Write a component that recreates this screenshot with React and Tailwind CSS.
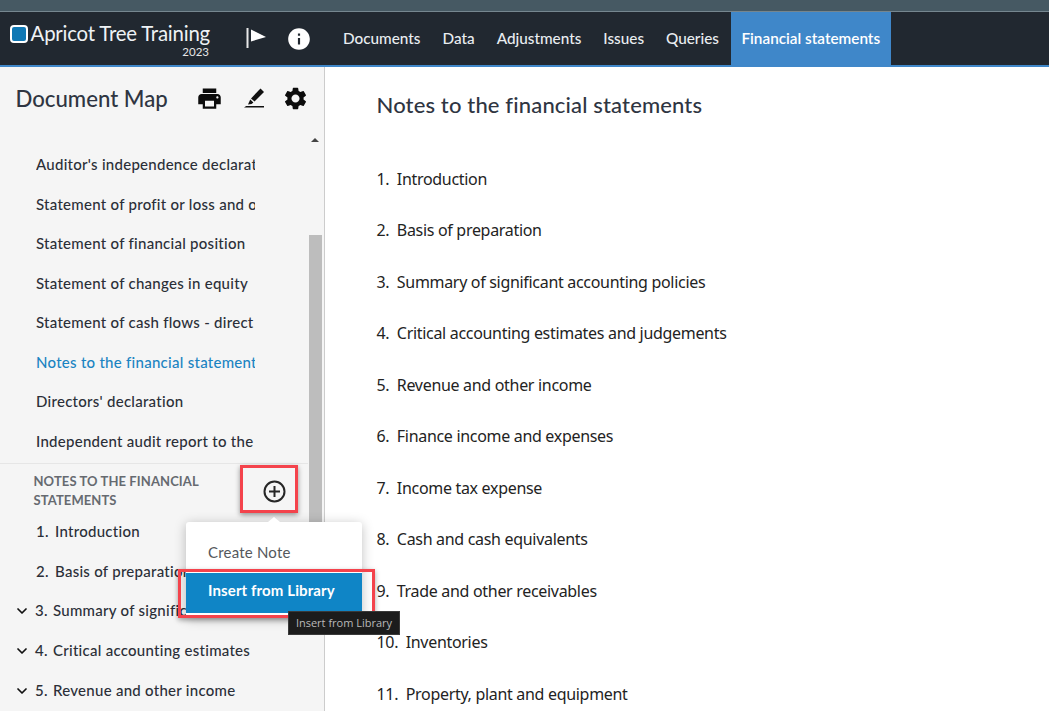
import React from "react";
import { MdPrint, MdSettings, MdInfo } from "react-icons/md";
import { ChevronDown } from "lucide-react";

const nav = ["Documents", "Data", "Adjustments", "Issues", "Queries"];
const docs = [
  "Auditor's independence declaration",
  "Statement of profit or loss and other comprehensive income",
  "Statement of financial position",
  "Statement of changes in equity",
  "Statement of cash flows - direct method",
  "Notes to the financial statements",
  "Directors' declaration",
  "Independent audit report to the members",
];
const notes = [
  ["1.", "Introduction", false],
  ["2.", "Basis of preparation", false],
  ["3.", "Summary of significant accounting policies", true],
  ["4.", "Critical accounting estimates", true],
  ["5.", "Revenue and other income", true],
];
const mainList = [
  ["1.", "Introduction"],
  ["2.", "Basis of preparation"],
  ["3.", "Summary of significant accounting policies"],
  ["4.", "Critical accounting estimates and judgements"],
  ["5.", "Revenue and other income"],
  ["6.", "Finance income and expenses"],
  ["7.", "Income tax expense"],
  ["8.", "Cash and cash equivalents"],
  ["9.", "Trade and other receivables"],
  ["10.", "Inventories"],
  ["11.", "Property, plant and equipment"],
];

function PenIcon() {
  return (
    <svg width="22" height="22" viewBox="0 0 22 22" fill="#111">
      <path d="M17.5 1.5 21 5 11.5 14.5 8 11.5Z" />
      <path d="M7.2 12.6 10.4 15.4 8.6 17 5 17.6Z" />
      <path d="M1 20.4 3.2 19H21V20.4Z" />
    </svg>
  );
}

export default function App() {
  return (
    <div className="relative w-[1049px] h-[711px] overflow-hidden bg-white font-['Lato',sans-serif] text-[#2b2f38]">
      <div className="h-3 bg-[#465963] border-b border-[#75868f]" />
      <header className="h-[55px] bg-[#212830] border-b-2 border-[#3f87c9] flex items-stretch">
        <div className="w-[332px] flex items-start pl-[10px]">
          <div className="mt-[13px] w-[18px] h-[18px] rounded-[4px] border-2 border-white bg-[#0f78b4] shrink-0" />
          <div className="ml-[4px] w-[178px] flex flex-col items-end shrink-0">
            <div className="mt-[8px] text-[20.4px] leading-[27px] tracking-[-0.2px] text-[#eef2f5] whitespace-nowrap">Apricot Tree Training</div>
            <div className="text-[11.5px] leading-[13px] -mt-[2px] text-[#e6e6e6] mr-px">2023</div>
          </div>
          <svg className="ml-[36px] mt-[16px] shrink-0" width="21" height="20" viewBox="0 0 21 20">
            <rect x="0.5" y="0" width="2" height="20" fill="#e8e8e8" />
            <path d="M5 1.5 20 9 5 13.5Z" fill="#fff" />
          </svg>
          <MdInfo className="ml-[19px] mt-[14px] text-white shrink-0" size={26} />
        </div>
        <nav className="flex items-stretch text-[15.3px] text-[#e9edf0] font-medium">
          {nav.map((n) => (
            <div key={n} className="px-[11px] flex items-center">{n}</div>
          ))}
          <div className="ml-[1px] pl-[10.5px] pr-[11px] flex items-center bg-[#3f87c9] text-white font-semibold">Financial statements</div>
        </nav>
      </header>
      <div className="flex h-[644px]">
        <aside className="w-[325px] shrink-0 bg-[#f5f5f5] border-r border-[#cccccc] flex flex-col">
          <div className="h-[66px] shrink-0 flex pl-[15.5px] pt-[16px]">
            <h1 className="mt-px text-[22.2px] leading-[30px] font-medium w-[180.5px] text-[#2f3542] shrink-0">Document Map</h1>
            <div className="flex items-start text-[#0c0c0c]">
              <MdPrint size={27} className="mt-[2px] shrink-0" />
              <div className="mt-[4px] ml-[19px] w-[24px] shrink-0 flex justify-center"><PenIcon /></div>
              <MdSettings size={27} className="mt-[2px] ml-[16px] shrink-0" />
            </div>
          </div>
          <div className="flex flex-1 min-h-0">
            <div className="w-[308px] shrink-0 pt-[12px]">
              {docs.map((d, i) => (
                <div key={d} className={`ml-9 w-[218.5px] h-[39.5px] leading-[39.5px] overflow-hidden whitespace-nowrap text-[15px] font-medium tracking-[0.27px] ${i === 5 ? "text-[#1b84c2]" : ""}`}>{d}</div>
              ))}
              <div className="mt-[2px] border-t border-[#e6e6e6] h-[48.5px] flex pl-[33.5px] pt-[8px]">
                <div className="w-[190px] text-[13px] leading-[19px] font-bold text-[#666a70] tracking-[0.1px]">NOTES TO THE FINANCIAL STATEMENTS</div>
              </div>
              {notes.map(([num, t, chev]) => (
                <div key={num} className="h-[39.7px] flex items-center text-[15px] font-medium tracking-[0.27px] whitespace-nowrap">
                  <div className="w-[35px] shrink-0 flex justify-end pr-[5px]">
                    {chev && <ChevronDown size={16} strokeWidth={2.6} className="text-[#111] mt-px" />}
                  </div>
                  <span className={chev ? "w-[18px] shrink-0" : "w-[20px] pl-px shrink-0"}>{num}</span>
                  <span className="w-[200px] overflow-hidden">{t}</span>
                </div>
              ))}
            </div>
            <div className="w-[14px] shrink-0 flex flex-col">
              <div className="h-[102px] flex justify-center pt-[5px]">
                <div className="w-0 h-0 border-x-[4px] border-x-transparent border-b-[4px] border-b-[#444]" />
              </div>
              <div className="w-[13px] ml-px h-[300px] bg-[#bdbdbd]" />
            </div>
          </div>
        </aside>
        <main className="flex-1 pl-[51.5px] pt-[22px]">
          <h2 className="text-[22px] leading-[32px] font-medium text-[#2f3542] tracking-[0.15px]">Notes to the financial statements</h2>
          <ul className="mt-[32.7px] font-['Noto_Sans',sans-serif] text-[16px] tracking-[-0.31px] text-[#232323]">
            {mainList.map(([n, t]) => (
              <li key={n} className="h-[51.5px] leading-[51.5px] whitespace-nowrap">
                <span className="mr-[7.5px]">{n}</span>{t}
              </li>
            ))}
          </ul>
        </main>
      </div>

      {/* plus button and its highlight */}
      <div className="absolute left-[240px] top-[465px] w-[58px] h-[48px] border-[3px] border-[#f4434c] shadow-[0_2px_5px_rgba(0,0,0,0.4)] flex items-center justify-center pl-[10px] pt-[5px]">
        <svg width="23" height="23" viewBox="0 0 23 23" fill="none" stroke="#262626" strokeWidth="2">
          <circle cx="11.5" cy="11.5" r="10" />
          <path d="M11.5 6V17M6 11.5H17" />
        </svg>
      </div>

      {/* popup menu */}
      <div className="absolute left-[186px] top-[522px] w-[176px] h-[95px] bg-white rounded-[3px] shadow-[0_2px_12px_rgba(0,0,0,0.25)] flex flex-col">
        <div className="absolute left-[82px] -top-[5px] w-0 h-0 border-x-[6px] border-x-transparent border-b-[5px] border-b-white" />
        <div className="h-[51px] flex items-center pl-[22px] pt-[9px] text-[15px] text-[#55585c] tracking-[0.2px]">Create Note</div>
        <div className="h-[40px] flex items-center pl-[22px] bg-[#0f85c6] text-[15px] font-bold text-white pb-[6px] tracking-[0.12px]">Insert from Library</div>
      </div>
      <div className="absolute left-[178px] top-[569px] w-[197px] h-[49px] border-[3px] border-[#f4434c] shadow-[0_2px_5px_rgba(0,0,0,0.35)]" />
      <div className="absolute left-[288px] top-[611px] w-[112px] h-[24px] bg-[#1c1c1c] border border-[#3a3a3a] text-[11px] leading-[22px] text-[#b9b9b9] text-center font-['Open_Sans',sans-serif] whitespace-nowrap">Insert from Library</div>
    </div>
  );
}
